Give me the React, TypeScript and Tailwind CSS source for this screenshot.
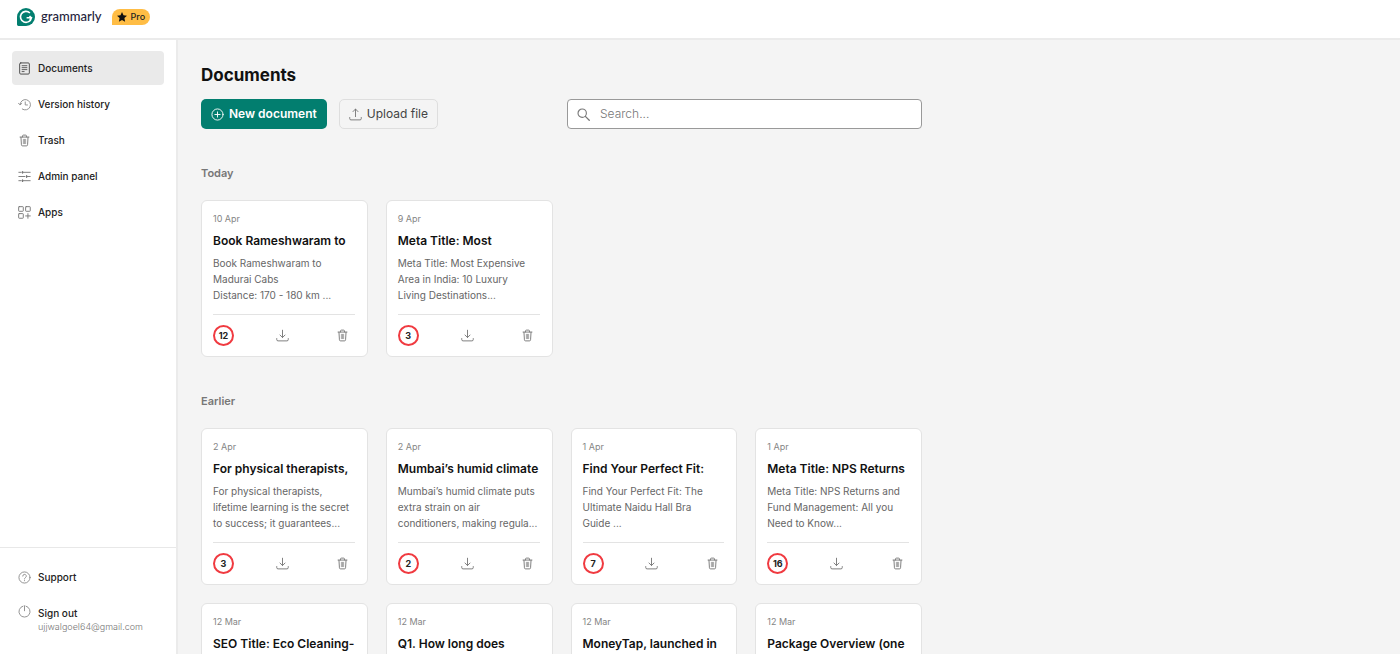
import type { ReactNode } from 'react'

type Doc = {
  date: string
  title: string
  preview?: string
  alerts?: number
}

const today: Doc[] = [
  {
    date: '10 Apr',
    title: 'Book Rameshwaram to',
    preview: 'Book Rameshwaram to\nMadurai Cabs\nDistance: 170 - 180 km ...',
    alerts: 12,
  },
  {
    date: '9 Apr',
    title: 'Meta Title: Most',
    preview: 'Meta Title: Most Expensive\nArea in India: 10 Luxury\nLiving Destinations...',
    alerts: 3,
  },
]

const earlier: Doc[] = [
  {
    date: '2 Apr',
    title: 'For physical therapists,',
    preview: 'For physical therapists,\nlifetime learning is the secret\nto success; it guarantees...',
    alerts: 3,
  },
  {
    date: '2 Apr',
    title: 'Mumbai’s humid climate',
    preview: 'Mumbai’s humid climate puts\nextra strain on air\nconditioners, making regula...',
    alerts: 2,
  },
  {
    date: '1 Apr',
    title: 'Find Your Perfect Fit:',
    preview: 'Find Your Perfect Fit: The\nUltimate Naidu Hall Bra\nGuide ...',
    alerts: 7,
  },
  {
    date: '1 Apr',
    title: 'Meta Title: NPS Returns',
    preview: 'Meta Title: NPS Returns and\nFund Management: All you\nNeed to Know...',
    alerts: 16,
  },
  { date: '12 Mar', title: 'SEO Title: Eco Cleaning-' },
  { date: '12 Mar', title: 'Q1. How long does' },
  { date: '12 Mar', title: 'MoneyTap, launched in' },
  { date: '12 Mar', title: 'Package Overview (one' },
]

const Icon = ({ children, className = 'text-[#777]' }: { children: ReactNode; className?: string }) => (
  <svg
    viewBox="0 0 14 14"
    fill="none"
    stroke="currentColor"
    strokeLinecap="round"
    strokeLinejoin="round"
    aria-hidden="true"
    className={`size-[13px] shrink-0 ${className}`}
  >
    {children}
  </svg>
)

const DocumentIcon = () => (
  <Icon className="text-[#444]">
    <rect x="1.8" y="1" width="10.4" height="12" rx="1.2" />
    <path d="M4.4 4h5.2M4.4 6.1h5.2M4.4 8.2h5.2M4.4 10.3h2.2" strokeWidth="0.9" />
  </Icon>
)

const HistoryIcon = () => (
  <Icon className="text-[#8d8d8d]">
    <path d="M2.2 7.2A5.6 5.6 0 1 1 4.6 11.9M.5 5.6l1.7 1.8 1.9-1.6M7.8 4.2v3.3h2.4" />
  </Icon>
)

const TrashIcon = () => (
  <Icon>
    <path d="M2.2 3.3h9.6M4.9 3.2V2.1q0-.9.9-.9h2.4q.9 0 .9.9v1.1M3.2 3.5l.5 8.100q.1 1.200 1.200 1.200h4.200q1.100 0 1.200-1.200l.5-8.100" />
    <path d="M5.8 5.7v4.7M7 5.7v4.7M8.2 5.7v4.7" strokeWidth="0.7" />
  </Icon>
)

const PanelIcon = () => (
  <Icon>
    <path d="M.9 2.5h2.6M5.5 2.5h7.6M.9 7h6.6M10 7h3.1M.9 11.5h2.6M5.5 11.5h7.6" />
    <path d="M4.9 1.7v1.6M9.3 6.2v1.6M4.9 10.7v1.6" strokeWidth="1.4" />
  </Icon>
)

const AppsIcon = () => (
  <Icon>
    <rect x="0.7" y="0.7" width="5" height="5" rx="0.6" />
    <rect x="8.2" y="0.7" width="5" height="5" rx="0.6" />
    <rect x="0.7" y="8.2" width="5" height="5" rx="0.6" />
    <path d="M10.7 8.2v5M8.2 10.7h5" />
  </Icon>
)

const HelpIcon = () => (
  <Icon className="text-[#8d8d8d]">
    <circle cx="7" cy="7" r="6" />
    <path d="M5.1 5.5a1.9 1.9 0 1 1 2.8 1.7Q7 7.7 7 8.6M7 10.3v.2" />
  </Icon>
)

const PowerIcon = () => (
  <Icon className="text-[#8d8d8d]">
    <path d="M5.4 1.2a6 6 0 1 0 3.2 0M7 .8v5.4" />
  </Icon>
)

const PlusIcon = () => (
  <Icon className="text-white">
    <circle cx="7" cy="7" r="6" />
    <path d="M7 4.2v5.6M4.2 7h5.6" />
  </Icon>
)

const UploadIcon = () => (
  <Icon>
    <path d="M7 9.3V1.2M4.3 3.9 7 1.1l2.7 2.8M.8 10.2v1.3q0 1.3 1.3 1.3h9.8q1.300 0 1.300-1.300v-1.300" />
  </Icon>
)

const DownloadIcon = () => (
  <Icon>
    <path d="M7 1.3v7.8M4.3 6.5 7 9.2l2.7-2.7M.8 10.3v1.1q0 1.4 1.4 1.4h9.6q1.4 0 1.4-1.4v-1.1" />
  </Icon>
)

const SearchIcon = () => (
  <Icon>
    <circle cx="5.6" cy="5.6" r="4.5" strokeWidth="1.2" />
    <path d="m9 9 4.2 4.2" strokeWidth="1.4" />
  </Icon>
)

const Logo = () => (
  <a href="#" className="flex items-center gap-1.5 text-[#1f243c]">
    <svg viewBox="0 0 18 18" className="size-[18px]" aria-hidden="true">
      <path d="M9 0a9 9 0 1 1 0 18H1.4Q0 18 0 16.6V9A9 9 0 0 1 9 0Z" fill="#027e6f" />
      <path
        d="M12.9 5A5.5 5.500 0 1 0 14.400 9.800H9.600M12.500 8l1.900 1.800-1.600 2.200"
        fill="none"
        stroke="white"
        strokeWidth="1.6"
      />
    </svg>
    <span className="font-[Lato,sans-serif] text-[13px] font-medium">grammarly</span>
  </a>
)

const navItems = [
  { label: 'Documents', icon: DocumentIcon, active: true },
  { label: 'Version history', icon: HistoryIcon },
  { label: 'Trash', icon: TrashIcon },
  { label: 'Admin panel', icon: PanelIcon },
  { label: 'Apps', icon: AppsIcon },
]

const DocCard = ({ doc }: { doc: Doc }) => (
  <article className="flex h-[157px] flex-col rounded-md border border-[#e3e3e3] bg-white pt-3 pr-3 pl-[11px]">
    <time className="text-[9px] leading-3 text-[#858585]">{doc.date}</time>
    <h3 className="mt-2 text-[12px] leading-4 font-semibold whitespace-nowrap text-[#111]">{doc.title}</h3>
    <p className="mt-1.5 h-12 text-[10px] leading-4 whitespace-pre text-[#666]">{doc.preview}</p>
    <div className="mt-[11px] flex items-center justify-between border-t border-[#e3e3e3] pt-2.5">
      <span className="flex size-[21px] items-center justify-center rounded-full border-2 border-[#f03a40] text-[9px] font-bold text-[#222]">
        {doc.alerts}
      </span>
      <button type="button" aria-label="Download" className="flex w-6 justify-center">
        <DownloadIcon />
      </button>
      <button type="button" aria-label="Delete" className="flex w-6 justify-center">
        <TrashIcon />
      </button>
    </div>
  </article>
)

const DocSection = ({ title, docs }: { title: string; docs: Doc[] }) => (
  <section>
    <h2 className="text-[11px] leading-4 font-semibold text-[#777]">{title}</h2>
    <div className="mt-[19px] grid grid-cols-4 gap-[18px]">
      {docs.map((doc) => (
        <DocCard key={doc.title} doc={doc} />
      ))}
    </div>
  </section>
)

const App = () => {
  return (
    <div className="flex h-screen flex-col bg-[#f4f4f4] font-[Inter,sans-serif] text-[#222]">
      <header className="flex h-10 shrink-0 items-center gap-2.5 border-b-2 border-[#ebebeb] bg-white px-[17px] pb-1">
        <Logo />
        <span className="flex h-4 items-center gap-1 rounded-full rounded-bl-sm bg-[#ffbd45] px-[5px] text-[9px] font-medium">
          <svg viewBox="0 0 10 10" className="size-2.5" fill="#111" aria-hidden="true">
            <path d="m5 0 1.5 3.3 3.5.4-2.6 2.4.7 3.6L5 7.9 1.9 9.7l.7-3.6L0 3.7l3.5-.4Z" />
          </svg>
          Pro
        </span>
      </header>

      <div className="flex min-h-0 flex-1">
        {/* Sidebar */}
        <aside className="flex w-[178px] shrink-0 flex-col justify-between border-r-2 border-[#ebebeb] bg-white">
          <nav className="flex flex-col gap-0.5 px-3 pt-[11px]">
            {navItems.map((item) => (
              <a
                key={item.label}
                href="#"
                className={`flex h-[34px] items-center gap-[7px] rounded px-1.5 text-[10px] font-medium ${item.active ? 'bg-[#eaeaea]' : ''}`}
              >
                <item.icon />
                {item.label}
              </a>
            ))}
          </nav>

          <div className="flex flex-col gap-5 border-t border-[#e8e8e8] px-[18px] pt-[21px] pb-[21px]">
            <a href="#" className="flex items-center gap-[7px] text-[10px] leading-4 font-medium">
              <HelpIcon />
              Support
            </a>
            <a href="#" className="flex items-start gap-[7px]">
              <PowerIcon />
              <span className="flex flex-col">
                <span className="text-[10px] leading-4 font-medium">Sign out</span>
                <span className="text-[9px] leading-3 font-light text-[#777]">ujjwalgoel64@gmail.com</span>
              </span>
            </a>
          </div>
        </aside>

        {/* Document list */}
        <main className="min-w-0 flex-1 overflow-y-auto px-[23px] pt-[23px] [scrollbar-width:none]">
          <div className="max-w-[721px]">
            <h1 className="text-[17px] leading-6 font-bold text-[#111]">Documents</h1>
            <div className="mt-3 flex items-center justify-between">
              <div className="flex gap-3">
                <button
                  type="button"
                  className="flex h-[30px] items-center gap-[5px] rounded-[5px] bg-[#027e6f] px-2.5 text-[12px] font-semibold text-white"
                >
                  <PlusIcon />
                  New document
                </button>
                <button
                  type="button"
                  className="flex h-[30px] items-center gap-[5px] rounded-[5px] border border-[#dedede] px-[9px] text-[12px] text-[#444]"
                >
                  <UploadIcon />
                  Upload file
                </button>
              </div>
              <label className="flex h-[30px] w-[355px] items-center gap-2.5 rounded border border-[#999] bg-white px-[9px]">
                <SearchIcon />
                <input
                  type="search"
                  aria-label="Search documents"
                  placeholder="Search..."
                  className="min-w-0 flex-1 text-[12px] font-light outline-none placeholder:text-[#777]"
                />
              </label>
            </div>

            <div className="mt-9 flex flex-col gap-9 pb-6">
              <DocSection title="Today" docs={today} />
              <DocSection title="Earlier" docs={earlier} />
            </div>
          </div>
        </main>
      </div>
    </div>
  )
}

export default App
